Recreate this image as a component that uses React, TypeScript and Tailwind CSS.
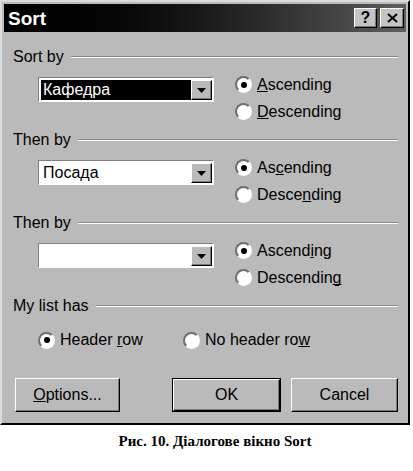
import React from "react";

const raised =
  "border border-t-white border-l-white border-r-black border-b-black shadow-[inset_-1px_-1px_0_#7a7a7a]";

function Radio({
  checked,
  children,
  className = "",
}: {
  checked?: boolean;
  children: React.ReactNode;
  className?: string;
}) {
  return (
    <div className={"flex items-center " + className}>
      <span className="w-[17px] h-[17px] rounded-full bg-white border-2 border-t-[#6e6e6e] border-l-[#6e6e6e] border-r-white border-b-white flex items-center justify-center shrink-0">
        {checked && <span className="w-[6px] h-[6px] rounded-full bg-black" />}
      </span>
      <span className="ml-[5px] text-[16px] leading-none text-black">{children}</span>
    </div>
  );
}

function U({ children }: { children: React.ReactNode }) {
  return <span className="underline [text-decoration-skip-ink:none]">{children}</span>;
}

function GroupLabel({ text }: { text: string }) {
  return (
    <div className="h-[20px] flex items-center">
      <span className="text-[16px] leading-none text-black">{text}</span>
      <div className="flex-1 ml-[7px] h-[2px] border-t border-t-[#8a8a8a] border-b border-b-white" />
    </div>
  );
}

function Combo({ value, selected }: { value: string; selected?: boolean }) {
  return (
    <div className="w-[176px] h-[25px] flex border border-t-[#808080] border-l-[#808080] border-r-white border-b-white shadow-[inset_1px_1px_0_#000]">
      <div className="flex-1 flex bg-white pl-[2px] pt-[2px] pb-[1px]">
        <div
          className={
            "flex-1 flex items-center pl-[2px] text-[16px] leading-none " +
            (selected ? "bg-black text-white" : "bg-white text-black")
          }
        >
          {value}
        </div>
      </div>
      <div className="pt-[2px] pb-[1px] pr-[1px] bg-white flex">
        <div className={"w-[21px] bg-[#bababa] flex items-center justify-center " + raised}>
          <svg width="9" height="5" viewBox="0 0 9 5">
            <path d="M0 0 H9 L4.5 5 Z" fill="#000" />
          </svg>
        </div>
      </div>
    </div>
  );
}

function Section({
  label,
  value,
  selected,
  asc,
  desc,
}: {
  label: string;
  value: string;
  selected?: boolean;
  asc: React.ReactNode;
  desc: React.ReactNode;
}) {
  return (
    <div className="flex flex-col h-[83px]">
      <GroupLabel text={label} />
      <div className="flex mt-[4px]">
        <div className="ml-[25px] mt-[6px]">
          <Combo value={value} selected={selected} />
        </div>
        <div className="ml-[21px] flex flex-col">
          <Radio checked className="h-[27px]">
            {asc}
          </Radio>
          <Radio className="h-[27px]">{desc}</Radio>
        </div>
      </div>
    </div>
  );
}

function Btn({
  children,
  w,
  def,
}: {
  children: React.ReactNode;
  w: string;
  def?: boolean;
}) {
  const inner = (
    <div
      className={
        "h-full w-full flex items-center justify-center text-[16px] text-black bg-[#bababa] " + raised
      }
    >
      {children}
    </div>
  );
  return def ? (
    <div className={"h-[34px] border border-black " + w}>{inner}</div>
  ) : (
    <div className={"h-[34px] " + w}>{inner}</div>
  );
}

export default function App() {
  return (
    <div
      className="w-[413px] h-[471px] bg-white"
      style={{ fontFamily: '"Liberation Sans", Arial, sans-serif' }}
    >
      <div className="w-[410px] h-[425px] bg-[#bababa] border-2 border-t-[#dcdcdc] border-l-[#dcdcdc] border-r-black border-b-black p-[2px] flex flex-col">
        <div className="h-[28px] flex items-center bg-gradient-to-r from-black via-[#1a1a1a] to-[#5e5e5e] pl-[4px] pr-[2px]">
          <span className="text-white font-bold text-[19px] leading-none">Sort</span>
          <div className="ml-auto flex gap-[3px]">
            <div className={"w-[23px] h-[20px] bg-[#c4c4c4] flex items-center justify-center font-bold text-[16px] leading-none " + raised}>
              ?
            </div>
            <div className={"w-[24px] h-[20px] bg-[#c4c4c4] flex items-center justify-center " + raised}>
              <svg width="11" height="10" viewBox="0 0 11 10">
                <path d="M1 1 L10 9 M10 1 L1 9" stroke="#000" strokeWidth="2" />
              </svg>
            </div>
          </div>
        </div>
        <div className="flex flex-col pl-[9px] pr-[8px] pt-[15px]">
          <Section
            label="Sort by"
            value="Кафедра"
            selected
            asc={<><U>A</U>scending</>}
            desc={<><U>D</U>escending</>}
          />
          <Section
            label="Then by"
            value="Посада"
            asc={<>As<U>c</U>ending</>}
            desc={<>Desce<U>n</U>ding</>}
          />
          <Section
            label="Then by"
            value=""
            asc={<>Ascend<U>i</U>ng</>}
            desc={<>Descendin<U>g</U></>}
          />
          <GroupLabel text="My list has" />
          <div className="flex mt-[14px] ml-[25px] h-[20px]">
            <Radio checked className="w-[145px]">
              Header <U>r</U>ow
            </Radio>
            <Radio>
              No header ro<U>w</U>
            </Radio>
          </div>
          <div className="flex mt-[28px] ml-[2px]">
            <Btn w="w-[106px]">
              <span><U>O</U>ptions...</span>
            </Btn>
            <div className="ml-[52px]">
              <Btn w="w-[109px]" def>
                OK
              </Btn>
            </div>
            <div className="ml-[10px]">
              <Btn w="w-[107px]">Cancel</Btn>
            </div>
          </div>
        </div>
      </div>
      <div
        className="mt-[6px] pl-[17px] text-center font-bold text-[15px] leading-[20px] text-black"
        style={{ fontFamily: '"Liberation Serif", "Times New Roman", serif' }}
      >
        Рис. 10. Діалогове вікно Sort
      </div>
    </div>
  );
}
